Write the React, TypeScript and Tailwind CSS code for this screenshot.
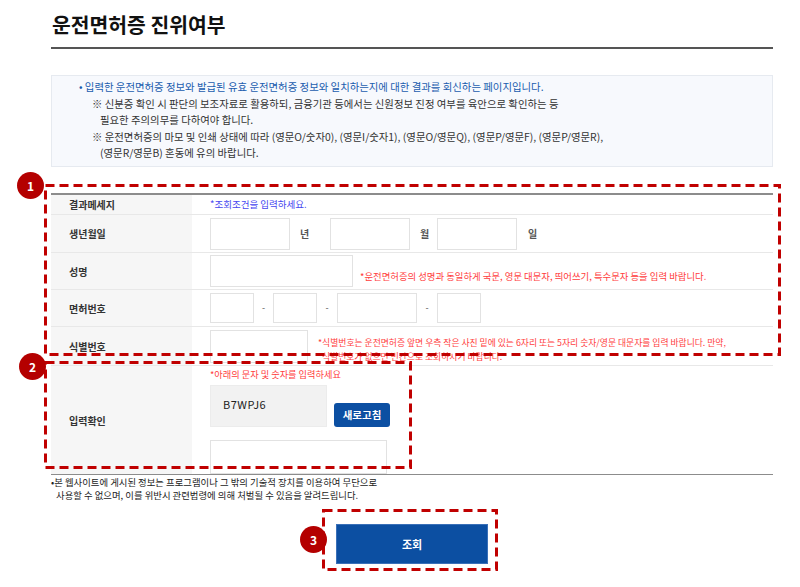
const font = { fontFamily: '"Noto Sans CJK KR", "Noto Sans", sans-serif' };

const Field = ({ w, h = "h-[32px]" }: { w: string; h?: string }) => (
  <div className={`${w} ${h} border border-[#e2e2e2] bg-white`} />
);

const Row = ({ label, h, children }: { label: string; h: string; children?: React.ReactNode }) => (
  <div className={`grid grid-cols-[141px_1fr] border-b border-[#e8e8e8] ${h}`}>
    <div className="bg-[#f6f6f6] flex items-center pl-[18px] text-[10px] font-bold text-[#333]">{label}</div>
    <div className="pl-[18px] flex items-center">{children}</div>
  </div>
);

const Marker = ({ n, className }: { n: number; className: string }) => (
  <div
    className={`absolute w-[27px] h-[27px] rounded-full bg-[#b40000] text-white text-[12px] font-bold flex items-center justify-center ${className}`}
  >
    {n}
  </div>
);

const DashBox = ({ className }: { className: string }) => (
  <svg className={`absolute pointer-events-none ${className}`} preserveAspectRatio="none">
    <rect x="1.5" y="1.5" width="calc(100% - 3px)" height="calc(100% - 3px)" fill="none" stroke="#c00000" strokeWidth="3" strokeDasharray="9 5" />
  </svg>
);

export default function App() {
  return (
    <div className="relative w-[800px] h-[587px] bg-white overflow-hidden text-[#333]" style={font}>
      <div className="ml-[51px] w-[722px]">
        <div className="pt-[12px] pb-[11px] border-b-2 border-[#555]">
          <h1 className="text-[20.4px] leading-[24px] font-bold text-[#111] pl-[1px]">운전면허증 진위여부</h1>
        </div>

        <div className="mt-[26px] h-[92px] bg-[#f7f9fd] border border-[#e6eaf0] pt-[3px] pl-[27px] text-[10.4px] leading-[16.5px]">
          <p className="text-[#1a5cae]">• 입력한 운전면허증 정보와 발급된 유효 운전면허증 정보와 일치하는지에 대한 결과를 회신하는 페이지입니다.</p>
          <p className="pl-[13px] text-[#333]">※ 신분증 확인 시 판단의 보조자료로 활용하되, 금융기관 등에서는 신원정보 진정 여부를 육안으로 확인하는 등</p>
          <p className="pl-[21px] text-[#333]">필요한 주의의무를 다하여야 합니다.</p>
          <p className="pl-[13px] text-[#333]">※ 운전면허증의 마모 및 인쇄 상태에 따라 (영문O/숫자0), (영문I/숫자1), (영문O/영문Q), (영문P/영문F), (영문P/영문R),</p>
          <p className="pl-[21px] text-[#333]">(영문R/영문B) 혼동에 유의 바랍니다.</p>
        </div>

        <div className="mt-[26px] border-t-2 border-[#8c8c8c]">
          <Row label="결과메세지" h="h-[20px]">
            <span className="text-[9.5px] text-[#4646f0]">*조회조건을 입력하세요.</span>
          </Row>
          <Row label="생년월일" h="h-[38px]">
            <Field w="w-[80px]" />
            <span className="ml-[10px] w-[30px] text-[10px] font-bold text-[#555]">년</span>
            <Field w="w-[80px]" />
            <span className="ml-[10px] w-[17px] text-[10px] font-bold text-[#555]">월</span>
            <Field w="w-[80px]" />
            <span className="ml-[11px] text-[10px] font-bold text-[#555]">일</span>
          </Row>
          <Row label="성명" h="h-[37px]">
            <Field w="w-[143px]" />
            <span className="ml-[7px] self-end mb-[6px] text-[9.4px] text-[#ff3c3c]">
              *운전면허증의 성명과 동일하게 국문, 영문 대문자, 띄어쓰기, 특수문자 등을 입력 바랍니다.
            </span>
          </Row>
          <Row label="면허번호" h="h-[37px]">
            <Field w="w-[44px]" h="h-[30px]" />
            <span className="w-[19px] text-center text-[9px] text-[#555]">-</span>
            <Field w="w-[44px]" h="h-[30px]" />
            <span className="w-[20px] text-center text-[9px] text-[#555]">-</span>
            <Field w="w-[80px]" h="h-[30px]" />
            <span className="w-[20px] text-center text-[9px] text-[#555]">-</span>
            <Field w="w-[44px]" h="h-[30px]" />
          </Row>
          <Row label="식별번호" h="h-[39px]">
            <div className="self-start mt-[3px] flex">
              <Field w="w-[98px]" h="h-[33px]" />
              <p className="ml-[10px] text-[8.8px] leading-[14px] text-[#ff3c3c] pt-[6px]">
                *식별번호는 운전면허증 앞면 우측 작은 사진 밑에 있는 6자리 또는 5자리 숫자/영문 대문자를 입력 바랍니다. 만약,
                <br />
                <span className="pl-[4px]">식별번호가 없으면 빈칸으로 조회하시기 바랍니다.</span>
              </p>
            </div>
          </Row>
          <div className="grid grid-cols-[141px_1fr] h-[109px] border-b border-[#8c8c8c]">
            <div className="bg-[#f6f6f6] flex items-center pl-[18px] text-[10px] font-bold text-[#333]">입력확인</div>
            <div className="pl-[18px] pt-[2px]">
              <p className="text-[9.2px] leading-[13px] text-[#ff3c3c]">*아래의 문자 및 숫자를 입력하세요</p>
              <div className="flex items-end mt-[4px]">
                <div className="w-[117px] h-[42px] bg-[#f2f2f2] border border-[#ececec] pl-[12px] pt-[11px] text-[11px] leading-[14px] text-[#222] tracking-[0.5px]">
                  B7WPJ6
                </div>
                <button className="ml-[7px] w-[56px] h-[24px] rounded-[3px] bg-[#0c4fa2] text-white text-[10.5px] font-bold">새로고침</button>
              </div>
              <div className="mt-[13px] w-[177px] h-[34px] border border-[#e2e2e2]" />
            </div>
          </div>
        </div>

        <div className="pt-[1px] text-[9.4px] leading-[13px] text-[#222]">
          <p>•본 웹사이트에 게시된 정보는 프로그램이나 그 밖의 기술적 장치를 이용하여 무단으로</p>
          <p className="pl-[5px]">사용할 수 없으며, 이를 위반시 관련법령에 의해 처벌될 수 있음을 알려드립니다.</p>
        </div>

        <div className="flex justify-center mt-[22px]">
          <button className="w-[152px] h-[40px] bg-[#0c4fa2] border border-[#3a70b8] text-white text-[11px] font-bold">조회</button>
        </div>
      </div>

      <DashBox className="left-[44px] top-[184px] w-[737px] h-[172px]" />
      <DashBox className="left-[44px] top-[361px] w-[368px] h-[108px]" />
      <DashBox className="left-[322px] top-[509px] w-[176px] h-[62px]" />
      <Marker n={1} className="left-[17px] top-[172px]" />
      <Marker n={2} className="left-[19px] top-[353px]" />
      <Marker n={3} className="left-[300px] top-[526px]" />
    </div>
  );
}
